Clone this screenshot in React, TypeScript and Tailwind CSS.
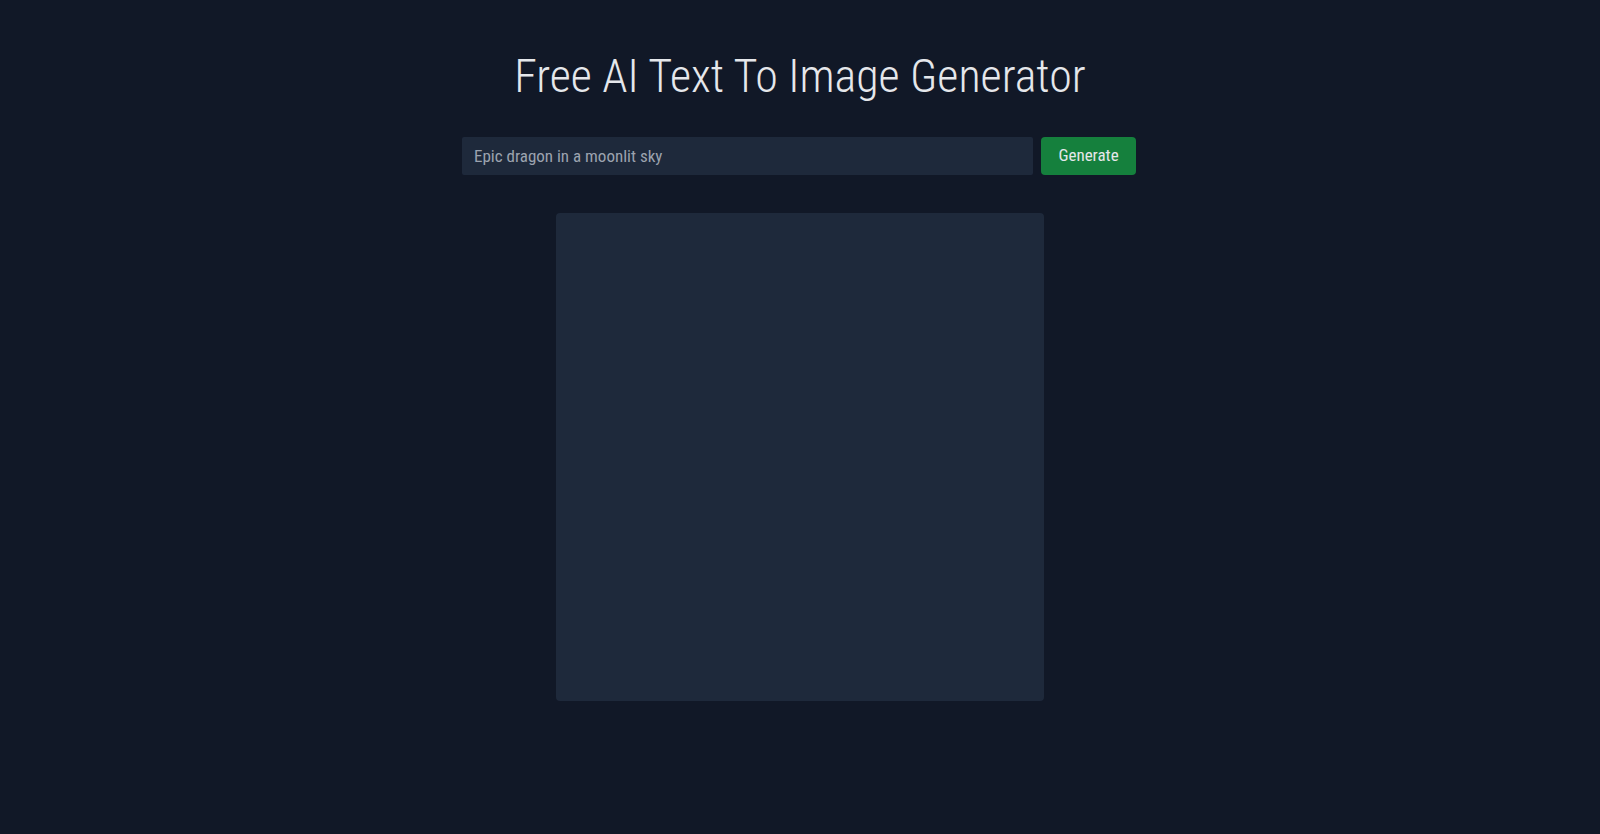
import React from "react";

export default function App() {
  return (
    <div className="min-h-[834px] w-full bg-[#111827] flex flex-col items-center font-['Roboto',sans-serif] [font-stretch:condensed]">
      <h1 className="mt-[46px] text-[46px] leading-[60px] font-light text-[#e5e7eb]">
        Free AI Text To Image Generator
      </h1>
      <div className="mt-[31px] flex gap-2 pr-[2px]">
        <input
          className="w-[571px] h-[38px] bg-[#1e293b] text-[#e5e7eb] placeholder:text-[#9ca3af] px-3 text-[17px] rounded-[2px] outline-none [font-stretch:condensed]"
          placeholder="Epic dragon in a moonlit sky"
        />
        <button className="w-[95px] h-[38px] bg-[#15803d] text-[#e5e7eb] text-[17px] rounded-[4px] [font-stretch:condensed]">
          Generate
        </button>
      </div>
      <div className="mt-[38px] w-[488px] h-[488px] bg-[#1e293b] rounded-[4px]" />
    </div>
  );
}
